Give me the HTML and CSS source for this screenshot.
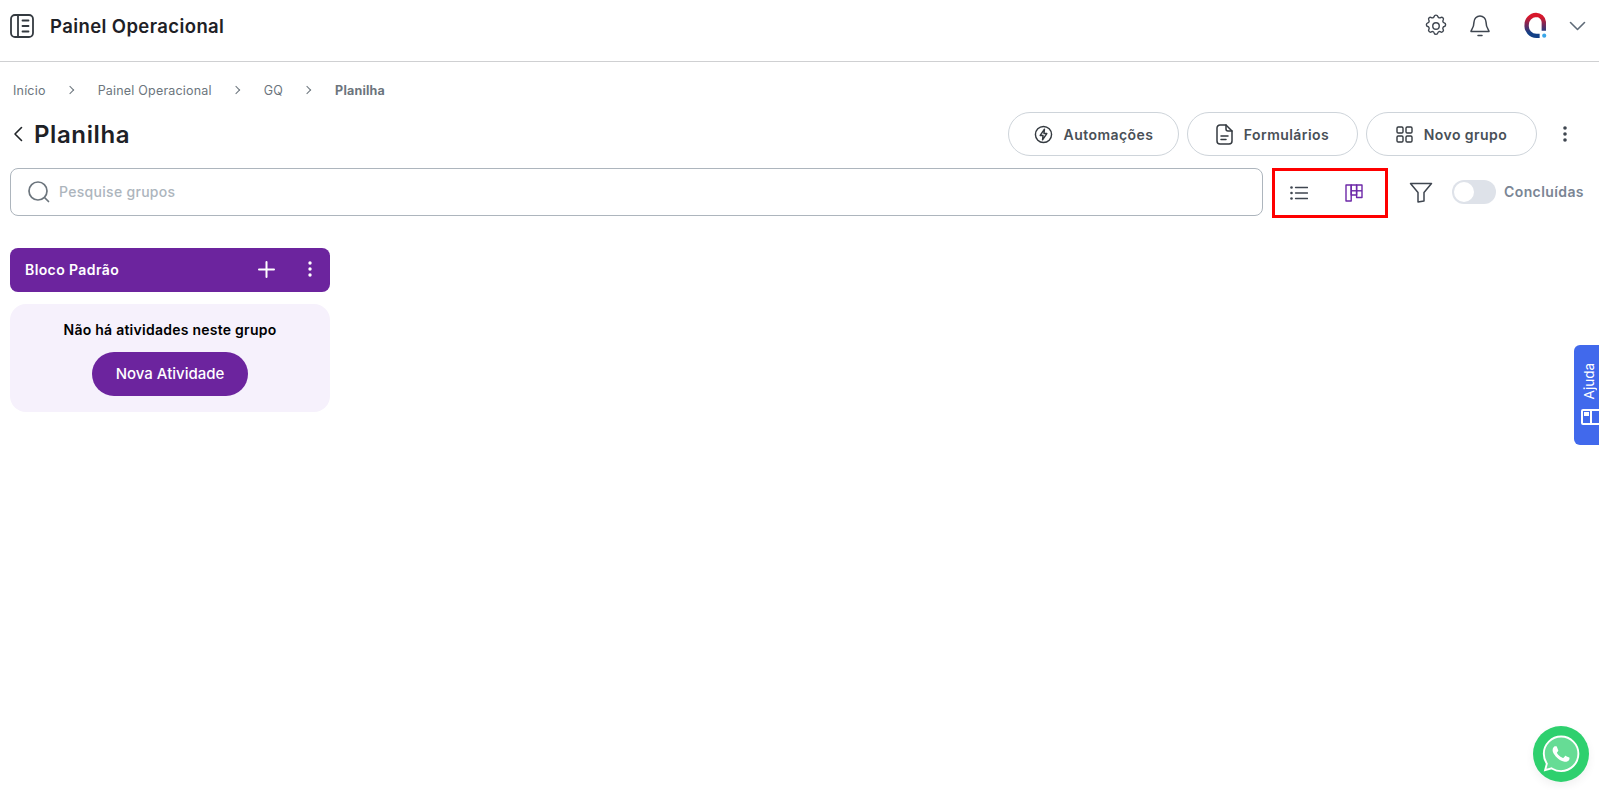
FILE: index.html
```html
<!DOCTYPE html>
<html lang="pt-BR">
<head>
<meta charset="utf-8">
<title>Planilha</title>
<link rel="stylesheet" href="styles.css">
</head>
<body>
<header class="topbar">
  <div class="brand">
    <svg class="brand-icon" width="24" height="24" viewBox="0 0 24 24" fill="none" stroke="#343a40" stroke-width="1.8" stroke-linecap="round" stroke-linejoin="round"><rect x="1" y="1" width="22" height="22" rx="4"/><path d="M8 1v22M12.5 6.500h6M12.5 12h6M12.5 17.500h6"/></svg>
    <span class="brand-name">Painel Operacional</span>
  </div>
  <div class="top-actions">
    <svg class="gear" width="26" height="26" viewBox="0 0 24 24" fill="none" stroke="#3f4650" stroke-width="1.300" stroke-linecap="round" stroke-linejoin="round"><path d="M10.3 3.2c.4-1.7 2.9-1.7 3.4 0a1.7 1.7 0 0 0 2.6 1c1.500-.9 3.200.8 2.300 2.300a1.700 1.700 0 0 0 1 2.600c1.700.4 1.700 2.900 0 3.400a1.700 1.700 0 0 0-1 2.600c.9 1.500-.8 3.200-2.300 2.300a1.700 1.700 0 0 0-2.600 1c-.4 1.700-2.900 1.700-3.400 0a1.700 1.700 0 0 0-2.600-1c-1.500.9-3.200-.8-2.300-2.300a1.700 1.700 0 0 0-1-2.600c-1.700-.4-1.700-2.900 0-3.400a1.700 1.700 0 0 0 1-2.600c-.9-1.500.8-3.200 2.300-2.300a1.700 1.700 0 0 0 2.600-1z"/><circle cx="12" cy="12" r="3"/></svg>
    <svg class="bell" width="22" height="24" viewBox="0 0 22 24" fill="none" stroke="#3f4650" stroke-width="1.500" stroke-linecap="round" stroke-linejoin="round"><path d="M11 2a6 6 0 0 0-6 6c0 6-3 8-3 9.500h18c0-1.500-3-3.500-3-9.500a6 6 0 0 0-6-6z"/><path d="M9 21.500h4"/></svg>
    <svg class="logo" width="25" height="27" viewBox="0 0 24 26" fill="none"><defs><linearGradient id="lg" x1="0" y1="0" x2="0" y2="1"><stop offset="0.1" stop-color="#d8172b"/><stop offset="0.5" stop-color="#6b2a5e"/><stop offset="0.85" stop-color="#123f86"/></linearGradient></defs><path d="M20 18V9.500A7.500 7.500 0 0 0 12.500 2.800 9.500 9.500 0 0 0 3.500 12.500 9.500 9.500 0 0 0 13 23h3" stroke="url(#lg)" stroke-width="4.200"/><circle cx="20.400" cy="22.800" r="2" fill="#3aa6e8"/></svg>
    <svg class="caret" width="17" height="10" viewBox="0 0 17 10" fill="none" stroke="#5f6b78" stroke-width="1.600" stroke-linecap="round" stroke-linejoin="round"><path d="M1.500 1.500l7 7 7-7"/></svg>
  </div>
</header>

<main class="page">
  <nav class="crumbs">
    <span>Início</span><i class="sep"></i>
    <span>Painel Operacional</span><i class="sep"></i>
    <span>GQ</span><i class="sep"></i>
    <span class="current">Planilha</span>
  </nav>

  <div class="title-row">
    <div class="title-wrap">
      <svg width="10" height="16" viewBox="0 0 10 16" fill="none" stroke="#212529" stroke-width="1.600" stroke-linecap="round" stroke-linejoin="round"><path d="M8.500 1.500L2 8l6.500 6.500"/></svg>
      <h1>Planilha</h1>
    </div>
    <div class="title-actions">
      <button class="pill">
        <svg width="19" height="19" viewBox="0 0 20 20" fill="none" stroke="#343a40" stroke-width="1.500" stroke-linejoin="round"><circle cx="10" cy="10" r="8.500"/><path d="M11 4.500L6.500 11h3L9 15.500 13.500 9h-3z"/></svg>
        Automações
      </button>
      <button class="pill">
        <svg width="17" height="21" viewBox="0 0 17 21" fill="none" stroke="#343a40" stroke-width="1.500" stroke-linecap="round" stroke-linejoin="round"><path d="M4 1h6l6 6v10a3 3 0 0 1-3 3H4a3 3 0 0 1-3-3V4a3 3 0 0 1 3-3z"/><path d="M10 1v4a2 2 0 0 0 2 2h4M5 12h7M5 15.500h5"/></svg>
        Formulários
      </button>
      <button class="pill">
        <svg width="17" height="17" viewBox="0 0 17 17" fill="none" stroke="#343a40" stroke-width="1.400"><rect x="1" y="1" width="6" height="6" rx="1.200"/><rect x="10" y="1" width="6" height="6" rx="1.200"/><rect x="1" y="10" width="6" height="6" rx="1.200"/><rect x="10" y="10" width="6" height="6" rx="1.200"/></svg>
        Novo grupo
      </button>
      <svg class="more" width="4" height="16" viewBox="0 0 4 16" fill="#3f4650"><circle cx="2" cy="2" r="1.800"/><circle cx="2" cy="8" r="1.800"/><circle cx="2" cy="14" r="1.800"/></svg>
    </div>
  </div>

  <div class="tool-row">
    <label class="search">
      <svg width="24" height="24" viewBox="0 0 24 24" fill="none" stroke="#6c757d" stroke-width="1.700" stroke-linecap="round"><circle cx="11" cy="11" r="9"/><path d="M18 18l3.500 3.500"/></svg>
      <span class="placeholder">Pesquise grupos</span>
    </label>
    <div class="views">
      <svg width="18" height="14" viewBox="0 0 18 14" fill="none" stroke="#3f4650" stroke-width="1.300" stroke-linecap="round"><path d="M5.500 1.500H17.500M5.500 7H17.500M5.500 12.500H17.500"/><circle cx="1.500" cy="1.500" r="1.300" fill="#3f4650" stroke="none"/><circle cx="1.500" cy="7" r="1.300" fill="#3f4650" stroke="none"/><circle cx="1.500" cy="12.500" r="1.300" fill="#3f4650" stroke="none"/></svg>
      <svg width="18" height="18" viewBox="0 0 18 18" fill="none" stroke="#6d28a8" stroke-width="1.400" stroke-linejoin="round"><rect x="1" y="1" width="5.200" height="16"/><rect x="6.200" y="1" width="5.400" height="10"/><rect x="11.600" y="1" width="5.400" height="12.500"/><path d="M6.200 6.800h10.800"/></svg>
    </div>
    <svg class="filter" width="24" height="21" viewBox="0 0 24 21" fill="none" stroke="#3f4650" stroke-width="1.500" stroke-linejoin="round"><path d="M1.500 1.500h21l-7.500 9v8.500l-6 1v-9.500z"/></svg>
    <span class="switch"><span class="knob"></span></span>
    <span class="switch-label">Concluídas</span>
  </div>

  <section class="column">
    <div class="col-head">
      <span class="col-name">Bloco Padrão</span>
      <svg class="plus" width="17" height="17" viewBox="0 0 17 17" fill="none" stroke="#fff" stroke-width="2" stroke-linecap="round"><path d="M8.500 1v15M1 8.500h15"/></svg>
      <svg class="dots" width="4" height="16" viewBox="0 0 4 16" fill="#fff"><circle cx="2" cy="2" r="1.700"/><circle cx="2" cy="8" r="1.700"/><circle cx="2" cy="14" r="1.700"/></svg>
    </div>
    <div class="col-body">
      <p class="empty">Não há atividades neste grupo</p>
      <button class="new-task">Nova Atividade</button>
    </div>
  </section>
</main>

<aside class="help">
  <span class="help-text">Ajuda</span>
  <svg width="20" height="16" viewBox="0 0 20 16" fill="none" stroke="#fff" stroke-width="2"><rect x="1" y="1" width="18" height="14" rx="1"/><path d="M10 1v14"/><path d="M3 3h5v4H3z" fill="#fff" stroke="none"/></svg>
</aside>

<a class="whats">
  <svg width="42" height="42" viewBox="0 0 24 24"><path d="M12.050 21.785h-.004a9.870 9.870 0 01-5.031-1.378l-.361-.214-3.741.982.998-3.648-.235-.374a9.860 9.860 0 01-1.510-5.260c.001-5.450 4.436-9.884 9.888-9.884 2.640 0 5.122 1.030 6.988 2.898a9.825 9.825 0 012.893 6.994c-.003 5.450-4.437 9.884-9.885 9.884" fill="#fff" fill-opacity=".27" stroke="#fff" stroke-width="1.100"/><path transform="translate(2.400 2.400) scale(.8)" d="M17.472 14.382c-.297-.149-1.758-.867-2.030-.967-.273-.099-.471-.148-.670.150-.197.297-.767.966-.940 1.164-.173.199-.347.223-.644.075-.297-.150-1.255-.463-2.390-1.475-.883-.788-1.480-1.761-1.653-2.059-.173-.297-.018-.458.130-.606.134-.133.298-.347.446-.520.149-.174.198-.298.298-.497.099-.198.050-.371-.025-.520-.075-.149-.669-1.612-.916-2.207-.242-.579-.487-.500-.669-.510-.173-.008-.371-.010-.570-.010-.198 0-.520.074-.792.372-.272.297-1.040 1.016-1.040 2.479 0 1.462 1.065 2.875 1.213 3.074.149.198 2.096 3.200 5.077 4.487.709.306 1.262.489 1.694.625.712.227 1.360.195 1.871.118.571-.085 1.758-.719 2.006-1.413.248-.694.248-1.289.173-1.413-.074-.124-.272-.198-.570-.347" fill="#fff"/></svg>
</a>
</body>
</html>
```

FILE: styles.css
```css
* { box-sizing: border-box; }
html, body { margin: 0; height: 100%; }
body {
  background: #fff;
  font-family: Inter, "Noto Sans", sans-serif;
  color: #212529;
  overflow: hidden;
}
svg { display: block; flex: none; }

.topbar {
  height: 62px;
  border-bottom: 1px solid #cfd0d2;
  display: flex;
  align-items: center;
  justify-content: space-between;
  padding: 0 13px 10px 10px;
}
.brand { display: flex; align-items: center; gap: 16px; }
.brand-name { font-size: 18.500px; font-weight: 600; letter-spacing: .4px; color: #1e2126; }
.top-actions { display: flex; align-items: center; }
.gear { margin-right: 20px; }
.bell { margin-right: 32px; }
.logo { margin-right: 21px; }

.page { padding: 0 13px 0 10px; }

.crumbs {
  display: flex;
  align-items: center;
  height: 18px;
  margin-top: 19px;
  padding-left: 3px;
  font-size: 12.500px;
  letter-spacing: .2px;
  color: #6c757d;
}
.sep {
  width: 6px;
  height: 6px;
  margin: 0 25px 0 21px;
  border-top: 1px solid #6c757d;
  border-right: 1px solid #6c757d;
  transform: rotate(45deg);
}
.current { font-weight: 700; }

.title-row {
  display: flex;
  align-items: center;
  justify-content: space-between;
  margin-top: 13px;
  height: 44px;
}
.title-wrap { display: flex; align-items: center; gap: 11px; padding-left: 3px; }
h1 { margin: 0; font-size: 24px; font-weight: 600; letter-spacing: .6px; color: #1e2126; }
.title-actions { display: flex; align-items: center; gap: 8px; }
.pill {
  width: 171px;
  height: 44px;
  display: flex;
  align-items: center;
  justify-content: center;
  gap: 11px;
  background: #fff;
  border: 1px solid #ced4da;
  border-radius: 22px;
  font-family: inherit;
  font-size: 14px;
  font-weight: 600;
  letter-spacing: .45px;
  color: #495057;
}
.more { margin-left: 18px; margin-right: 19px; }

.tool-row {
  display: flex;
  align-items: center;
  margin-top: 12px;
  height: 50px;
}
.search {
  width: 1253px;
  height: 48px;
  margin-bottom: 2px;
  display: flex;
  align-items: center;
  gap: 8px;
  padding: 0 0 1px 16px;
  border: 1px solid #adb5bd;
  border-radius: 8px;
}
.placeholder { font-size: 14px; letter-spacing: .3px; color: #adb5bd; font-weight: 500; }
.views {
  width: 116px;
  height: 50px;
  margin-left: 9px;
  display: flex;
  align-items: center;
  gap: 37px;
  padding-left: 15px;
  border: 3px solid #fe0000;
}
.filter { margin-left: 21px; margin-bottom: 2px; }
.switch {
  width: 44px;
  height: 24px;
  margin-left: 19px;
  margin-bottom: 2px;
  padding: 2px;
  border-radius: 12px;
  background: #dee2e9;
}
.knob { display: block; width: 20px; height: 20px; border-radius: 50%; background: #fff; }
.switch-label { margin-left: 8px; margin-bottom: 3px; font-size: 14px; font-weight: 600; letter-spacing: .4px; color: #7a8594; }

.column { width: 320px; margin-top: 30px; }
.col-head {
  height: 44px;
  display: flex;
  align-items: center;
  padding: 0 18px 2px 15px;
  border-radius: 8px;
  background: #6c249e;
  color: #fff;
}
.col-name { flex: 1; font-size: 14px; font-weight: 600; letter-spacing: .4px; }
.plus { margin-right: 33px; }
.col-body {
  margin-top: 12px;
  height: 108px;
  display: flex;
  flex-direction: column;
  align-items: center;
  padding-top: 17px;
  border-radius: 16px;
  background: #f6f1fc;
}
.empty { margin: 0; font-size: 14px; line-height: 18px; font-weight: 600; letter-spacing: .25px; color: #000; }
.new-task {
  width: 156px;
  height: 44px;
  margin-top: 13px;
  padding: 0 0 2px;
  border: 0;
  border-radius: 22px;
  background: #6c249e;
  color: #fff;
  font-family: inherit;
  font-size: 15px;
  font-weight: 500;
}

.help {
  position: fixed;
  top: 345px;
  right: 0;
  width: 25px;
  height: 100px;
  overflow: hidden;
  display: flex;
  flex-direction: column;
  align-items: flex-start;
  justify-content: flex-end;
  gap: 10px;
  padding: 0 0 20px 7px;
  border-radius: 6px 0 0 6px;
  background: #4169ec;
  color: #fff;
}
.help-text { writing-mode: vertical-rl; transform: rotate(180deg); font-size: 13.500px; }

.whats {
  position: fixed;
  left: 1533px;
  top: 726px;
  width: 56px;
  height: 56px;
  display: flex;
  align-items: center;
  justify-content: center;
  border-radius: 50%;
  background: #2ed06e;
  box-shadow: 0 4px 10px rgba(0,0,0,.06);
}
```
